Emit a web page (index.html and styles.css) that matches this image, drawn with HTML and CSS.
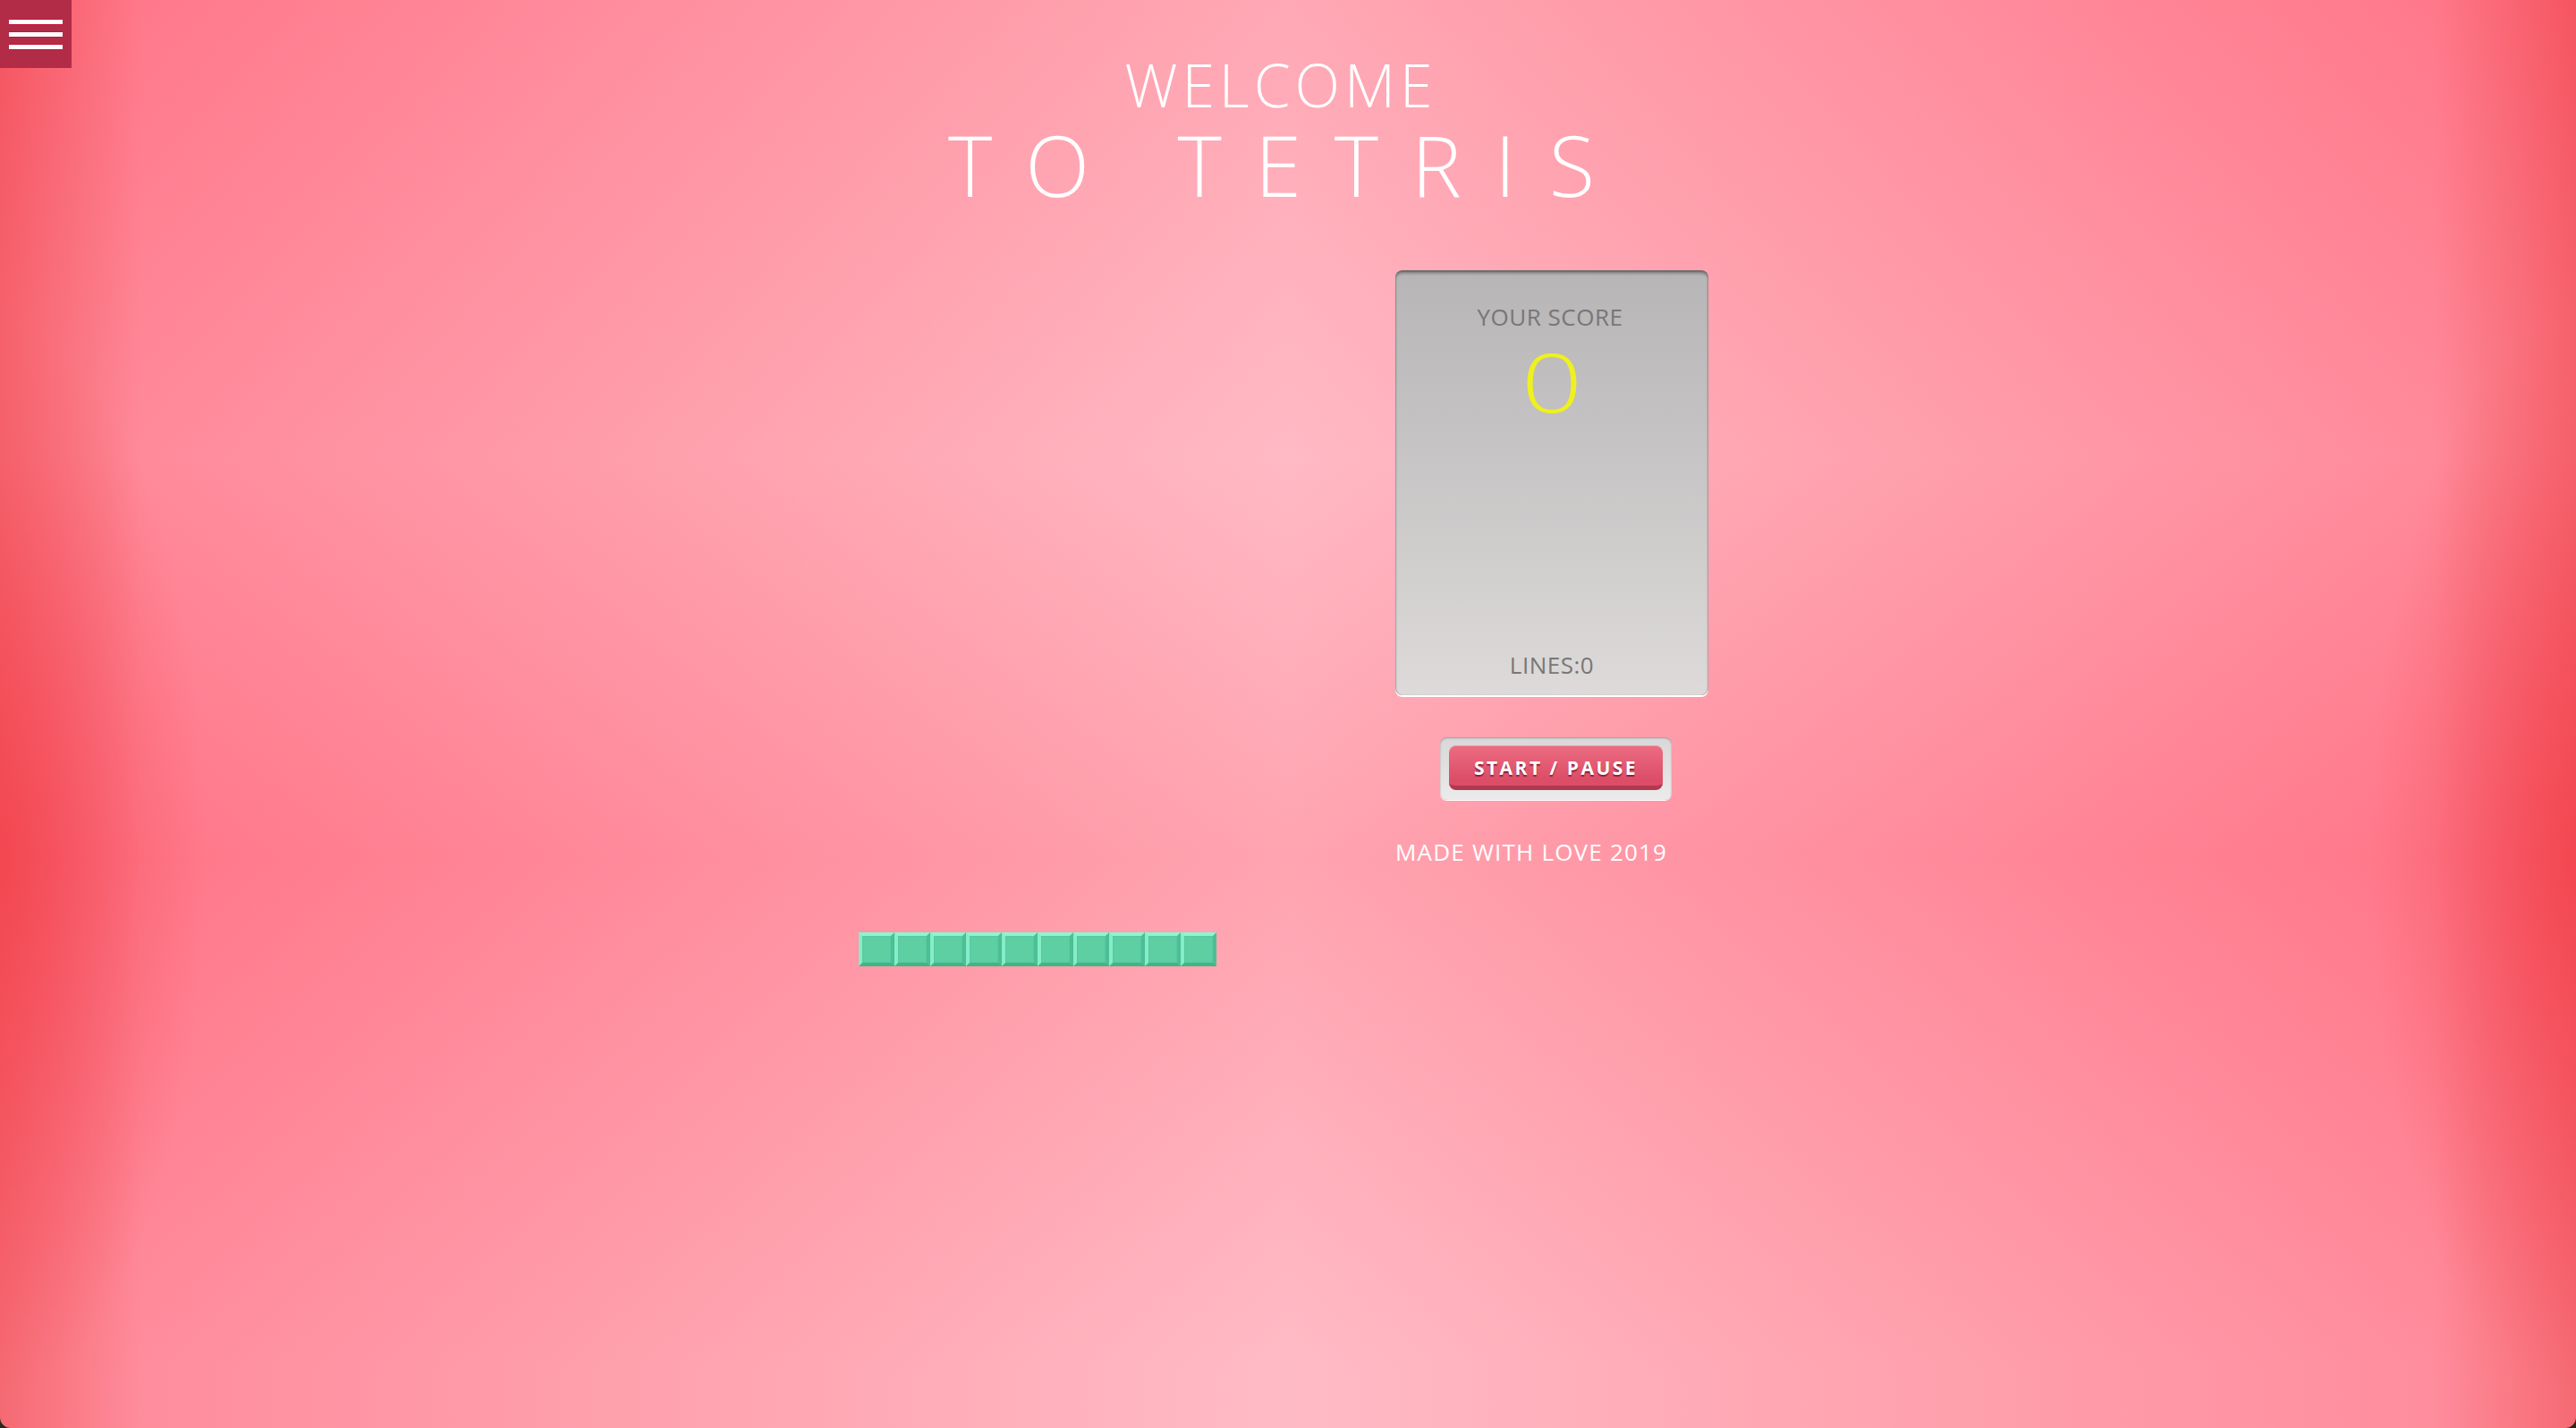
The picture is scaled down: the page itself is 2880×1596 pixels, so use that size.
FILE: index.html
```html
<!DOCTYPE html>
<html lang="en">
<head>
<meta charset="utf-8">
<title>Tetris</title>
<link rel="stylesheet" href="styles.css">
</head>
<body>
<div class="page">
  <button class="menu" aria-label="Menu">
    <span class="bar"></span>
    <span class="bar"></span>
    <span class="bar"></span>
  </button>
  <header class="title">
    <div class="welcome">WELCOME</div>
    <div class="tetris">TO TETRIS</div>
  </header>
  <main class="game">
    <div class="board">
      <div class="piece-row">
        <span class="cell"></span><span class="cell"></span><span class="cell"></span><span class="cell"></span><span class="cell"></span><span class="cell"></span><span class="cell"></span><span class="cell"></span><span class="cell"></span><span class="cell"></span>
      </div>
    </div>
    <aside class="side">
      <div class="score-panel">
        <div class="score-label">YOUR SCORE</div>
        <div class="score-value"><span class="digit">0</span></div>
        <div class="lines">LINES:0</div>
      </div>
      <div class="btn-well">
        <button class="btn">START / PAUSE</button>
      </div>
      <p class="made">MADE WITH LOVE 2019</p>
    </aside>
  </main>
</div>
</body>
</html>
```
FILE: styles.css
```css
html {
  margin: 0;
  background: #2b2a1c;
}
body {
  margin: 0;
  font-family: "Open Sans", "Noto Sans", sans-serif;
}
.page {
  position: relative;
  width: 2880px;
  height: 1596px;
  overflow: hidden;
  border-radius: 0 0 12px 12px;
  background:
    radial-gradient(ellipse 230px 600px at 0 60%, rgba(240, 60, 70, 0.55), rgba(240, 60, 70, 0) 100%),
    radial-gradient(ellipse 230px 600px at 100% 60%, rgba(240, 60, 70, 0.55), rgba(240, 60, 70, 0) 100%),
    linear-gradient(to bottom, rgba(255, 110, 130, 0.12) 0%, rgba(255, 255, 255, 0.12) 32%, rgba(255, 100, 120, 0.16) 60%, rgba(255, 255, 255, 0.14) 96%),
    linear-gradient(to right, #f4515b 0%, #ff7a8c 5.5%, #ffb0bc 50%, #ff7a8c 94.5%, #f4515b 100%);
}
.menu {
  position: absolute;
  left: 0;
  top: 0;
  width: 80px;
  height: 76px;
  background: #b22c48;
  border: 0;
  padding: 21px 10px 0;
  display: flex;
  flex-direction: column;
  gap: 7px;
  box-sizing: border-box;
}
.bar {
  display: block;
  width: 60px;
  height: 5px;
  background: #fff;
  border-top: 1px solid #c41433;
  border-bottom: 1px solid #c41433;
}
.title {
  padding-top: 64px;
  text-align: center;
  color: #fff;
  font-weight: 300;
}
.welcome {
  font-size: 66px;
  line-height: 60px;
  letter-spacing: 5px;
  padding-right: 16px;
}
.tetris {
  font-size: 94px;
  line-height: 90px;
  letter-spacing: 37px;
  padding-left: 0;
  margin-top: 15px;
}
.game {
  display: flex;
  justify-content: center;
  gap: 200px;
  margin-top: 73px;
  padding-right: 10px;
}
.board {
  width: 400px;
  padding-top: 740px;
}
.piece-row {
  display: flex;
}
.cell {
  width: 40px;
  height: 38px;
  box-sizing: border-box;
  background: #5ecea3;
  border-style: solid;
  border-width: 4px;
  border-color: #8ef5d1 #4bbf95 #3fb686 #86edc8;
  box-shadow: inset 0 0 0 1px rgba(80, 190, 150, 0.35);
}
.side {
  width: 350px;
  display: flex;
  flex-direction: column;
}
.score-panel {
  height: 475px;
  box-sizing: border-box;
  border-radius: 8px;
  background: linear-gradient(to bottom, #b7b5b5 0%, #c5c3c3 40%, #dddad9 100%);
  border-top: 2px solid #6f6f6f;
  box-shadow: inset 0 2px 3px rgba(0, 0, 0, 0.25), inset 1px 0 1px rgba(0, 0, 0, 0.15), inset -1px 0 1px rgba(0, 0, 0, 0.15), 0 2px 0 #ffffff;
  display: flex;
  flex-direction: column;
  align-items: center;
  color: #777;
}
.score-label {
  font-size: 26px;
  line-height: 26px;
  margin-top: 37px;
  padding-right: 4px;
  letter-spacing: 0.5px;
}
.score-value {
  font-size: 91px;
  line-height: 80px;
  color: #eff01f;
  font-weight: 300;
  margin-top: 19px;
}
.digit {
  display: inline-block;
  transform: scaleX(1.32);
}
.lines {
  margin-top: auto;
  margin-bottom: 19px;
  font-size: 26px;
  line-height: 30px;
  letter-spacing: 0.5px;
}
.btn-well {
  margin: 47px 0 0 50px;
  width: 259px;
  height: 70px;
  box-sizing: border-box;
  padding: 10px;
  border-radius: 8px;
  background: linear-gradient(to bottom, #d9d7d7, #ecebeb);
  box-shadow: inset 0 1px 2px rgba(0, 0, 0, 0.3), 0 1px 0 #fff;
}
.btn {
  display: block;
  width: 239px;
  height: 50px;
  border: 0;
  border-radius: 8px;
  background: linear-gradient(to bottom, #ec6d82 0%, #dc4d67 85%);
  border-bottom: 5px solid #b2384f;
  box-shadow: inset 0 1px 0 rgba(255, 255, 255, 0.35);
  color: #fff;
  font-family: "Open Sans", "Noto Sans", sans-serif;
  font-weight: 700;
  font-size: 21px;
  letter-spacing: 2.5px;
  text-shadow: 0 2px 1px rgba(120, 20, 45, 0.8);
  padding: 4px 0 0 0;
  margin: -1px 0 0 0;
}
.made {
  margin: 43px 0 0 0;
  font-size: 26px;
  line-height: 30px;
  letter-spacing: 1.2px;
  color: #fff;
  white-space: nowrap;
}
```
